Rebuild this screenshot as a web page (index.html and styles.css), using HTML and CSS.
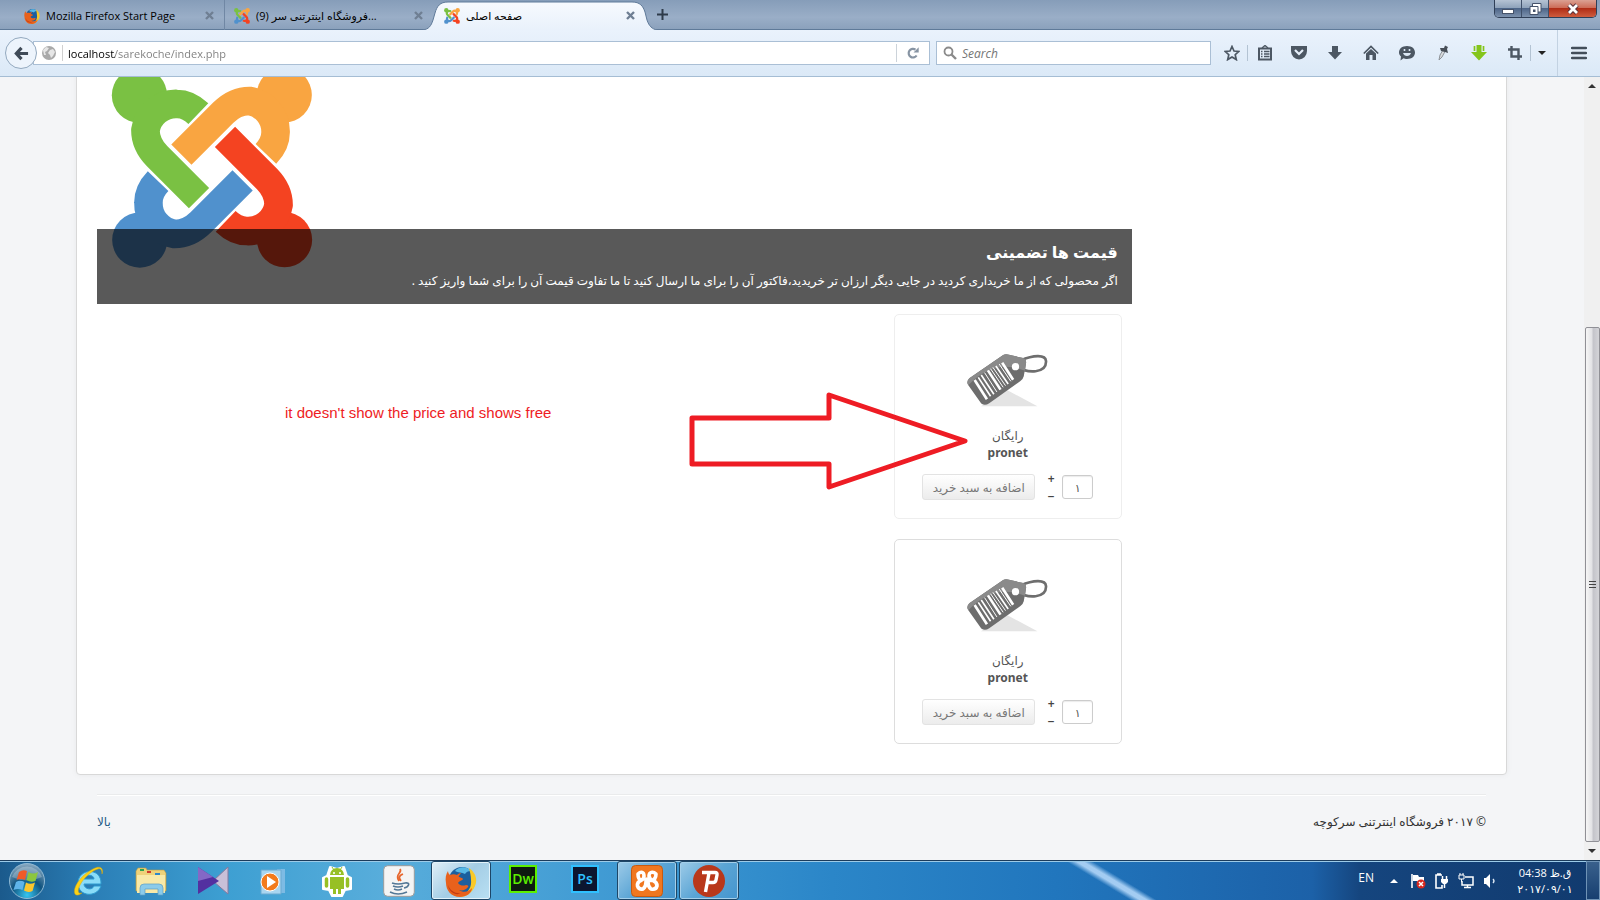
FILE: index.html
```html
<!DOCTYPE html>
<html lang="fa">
<head>
    <meta charset="UTF-8">
    <meta name="viewport" content="width=device-width, initial-scale=1.0">
    <title>صفحه اصلی</title>
    <link rel="stylesheet" href="styles.css">
</head>
<body>
    <!-- shared shapes -->
    <svg class="defs" aria-hidden="true">
        <defs>
            <g id="arm">
                <circle cx="207" cy="75" r="83"/>
                <path d="M386 384L260 258Q225 222 225 180A93 93 0 0 1 320 101Q354 101 384 130" fill="none" stroke="currentColor" stroke-width="86"/>
            </g>
            <symbol id="joomla" viewBox="120 -10 610 607">
                <use href="#arm" fill="#7ac143" color="#7ac143"/>
                <use href="#arm" fill="#f9a541" color="#f9a541" transform="rotate(90 425 292)"/>
                <use href="#arm" fill="#f44321" color="#f44321" transform="rotate(180 425 292)"/>
                <use href="#arm" fill="#5091cd" color="#5091cd" transform="rotate(270 425 292)"/>
            </symbol>
            <symbol id="firefox" viewBox="0 0 32 32">
                <circle cx="17" cy="15" r="13" fill="#1b5f9e"/>
                <path d="M10 6c4-5 12-5 16 0-3 0-5 1-6 3-3-2-7-1-10-3z" fill="#58b9e6"/>
                <path d="M24 3c6 4 9 11 6 18-3 7-9 11-15 11 7-3 12-9 11-17 0-4-1-8-2-12z" fill="#f9c928"/>
                <path d="M3 6c0 2 1 3 2 4 2-1 5-1 7 0 1-1 2-2 4-2-1 2-3 3-2 4 2 1 4 1 4 2s-4 2-5 4c2 3 6 3 8 2 2 0 3 1 2 2-2 3-6 4-9 3 4 3 10 2 13-2 0 5-6 9-12 9C6 32 1 25 1 18 0 13 1 9 3 6z" fill="#e8611c"/>
                <path d="M3 20c2 6 8 9 13 8-4 3-12 0-13-8z" fill="#c23a14"/>
            </symbol>
            <symbol id="close" viewBox="0 0 9 9">
                <path d="M1 1L8 8M8 1L1 8" stroke="#6f7f93" stroke-width="2.4"/>
            </symbol>
            <symbol id="tag" viewBox="263 160 244 162">
                <path d="M305 320L385 272 475 320z" fill="#e4e4e4"/>
                <path d="M412 200C445 222 503 222 501 184C500 163 462 166 424 182" fill="none" stroke="#6e6e6e" stroke-width="8"/>
                <path d="M270 236L372 166Q378 162 386 164L432 175Q442 179 441 189L434 230Q432 239 424 244L330 311Q317 320 306 312L267 257Q260 246 270 236z" fill="#6d6d6d"/>
                <path d="M270 236L372 166Q378 162 386 164L432 175Q442 179 441 189L438 213Q345 176 267 257Q260 246 270 236z" fill="#8a8a8a"/>
                <circle cx="409" cy="201" r="11" fill="#fff"/>
                <g stroke="#fff">
                    <path d="M286 241L323 299M326 212L364 270M369 189L402 240" stroke-width="8"/>
                    <path d="M297 233L334 290M306 226L344 284M350 199L387 253" stroke-width="5"/>
                    <path d="M316 219L353 277M334 207L372 263M341 203L379 258M360 193L395 245" stroke-width="3"/>
                </g>
            </symbol>
        </defs>
    </svg>

    <header class="tabbar">
        <div class="tab">
            <svg class="favicon"><use href="#firefox"/></svg>
            <span class="tab-title">Mozilla Firefox Start Page</span>
            <button class="tab-close" aria-label="Close tab"><svg><use href="#close"/></svg></button>
        </div>
        <div class="tab tab-second">
            <svg class="favicon"><use href="#joomla"/></svg>
            <span class="tab-title">(9) فروشگاه اینترتنی سر...</span>
            <button class="tab-close" aria-label="Close tab"><svg><use href="#close"/></svg></button>
        </div>
        <div class="tab tab-active">
            <svg class="tab-shape" viewBox="0 0 234 30" preserveAspectRatio="none">
                <defs>
                    <linearGradient id="tabfill" x2="0" y2="1"><stop stop-color="#f7fafe"/><stop offset="1" stop-color="#e9f1fb"/></linearGradient>
                </defs>
                <path d="M0 30C6 29 8 26 10 20L12 13C14 6 17 2 25 2H209C217 2 220 6 222 12L224 20C226 26 229 29 234 30" fill="url(#tabfill)" stroke="#5f7a99"/>
            </svg>
            <svg class="favicon"><use href="#joomla"/></svg>
            <span class="tab-title">صفحه اصلی</span>
            <button class="tab-close" aria-label="Close tab"><svg><use href="#close"/></svg></button>
        </div>
        <button class="new-tab" aria-label="New tab">
            <svg viewBox="0 0 11 11"><path d="M5.500 0V11M0 5.500H11" stroke="#2e3b4a" stroke-width="2"/></svg>
        </button>
        <div class="window-buttons">
            <button class="win" aria-label="Minimize"><svg viewBox="0 0 14 12"><rect x="1.500" y="6.500" width="11" height="4" fill="#fff" stroke="#46536a"/></svg></button>
            <button class="win" aria-label="Restore"><svg viewBox="0 0 14 12"><path d="M4.500.5H13V9H4.500z" fill="#fff" stroke="#46536a"/><path d="M2 3.500H10V11.500H2z" fill="#fff" stroke="#46536a"/><path d="M5 6.500H7.500V9H5z" fill="#46536a"/></svg></button>
            <button class="win win-close" aria-label="Close"><svg viewBox="0 0 14 12"><path d="M3 2L11 10M11 2L3 10" stroke="#55303a" stroke-width="4.600"/><path d="M3 2L11 10M11 2L3 10" stroke="#fff" stroke-width="2.800"/></svg></button>
        </div>
    </header>

    <nav class="toolbar">
        <button class="back" aria-label="Back">
            <svg viewBox="0 0 16 16"><path d="M8 2L2.500 8 8 14M3 8H15" fill="none" stroke="#404b58" stroke-width="3.400"/></svg>
        </button>
        <div class="urlbar">
            <svg class="globe" viewBox="0 0 14 14"><circle cx="7" cy="7" r="7" fill="#a9a9a9"/><path d="M1 4L4 1 7 2 5 5 3 6 4 9 2 9zM8 4L11 3 13 6 11 10 9 12 8 9 6 7z" fill="#e6e6e6"/></svg>
            <input class="url" type="text" aria-label="Address" value="localhost/sarekoche/index.php">
            <button class="reload" aria-label="Reload">
                <svg viewBox="0 0 12 12"><path d="M9.600 8.500A4.300 4.300 0 1 1 8.500 2.700" fill="none" stroke="#8794a3" stroke-width="2.200"/><path d="M6.500 5.500H11.700V.2z" fill="#8794a3"/></svg>
            </button>
        </div>
        <div class="search">
            <svg viewBox="0 0 14 14"><circle cx="5.500" cy="5.500" r="4" fill="none" stroke="#8a8a8a" stroke-width="1.800"/><path d="M8.500 8.500L13 13" stroke="#8a8a8a" stroke-width="2.400"/></svg>
            <input type="text" placeholder="Search" aria-label="Search">
        </div>
        <div class="tools">
            <button aria-label="Bookmark"><svg viewBox="0 0 16 16"><path d="M8 1.500L10 6 14.800 6.400 11.200 9.700 12.300 14.600 8 12 3.700 14.600 4.800 9.700 1.200 6.400 6 6z" fill="none" stroke="#4c5763" stroke-width="1.700"/></svg></button>
            <button class="divided" aria-label="Bookmarks list"><svg viewBox="0 0 16 16"><path d="M2 3.500H14V14.500H2z" fill="none" stroke="#4c5763" stroke-width="2"/><path d="M5 3L8 .5 11 3M4 6.500H5.500M7 6.500H12.500M4 9H5.500M7 9H12.500M4 11.500H5.500M7 11.500H12.500" fill="none" stroke="#4c5763" stroke-width="1.400"/></svg></button>
            <button aria-label="Pocket"><svg viewBox="0 0 16 16"><path d="M0 1H16V6A8 8.500 0 0 1 0 6z" fill="#4c5763"/><path d="M4 5L8 9 12 5" fill="none" stroke="#e6effa" stroke-width="2.200"/></svg></button>
            <button aria-label="Downloads"><svg viewBox="0 0 16 16"><path d="M5 1H11V7H15L8 14.500 1 7H5z" fill="#4c5763"/></svg></button>
            <button aria-label="Home"><svg viewBox="0 0 16 16"><path d="M.8 8.500L8 1.500 15.200 8.500" fill="none" stroke="#4c5763" stroke-width="1.700"/><path d="M3 8.500L8 4 13 8.500V15H9.500V10H6.500V15H3z" fill="#4c5763"/></svg></button>
            <button aria-label="Chat"><svg viewBox="0 0 16 16"><path d="M8 1C13 1 16 3.800 16 7.500S13 14 8 14C6.500 14 5.500 13.700 4.500 13.300L1.500 15.500 2 11.500C.5 10 0 9 0 7.500 0 3.800 3 1 8 1z" fill="#4c5763"/><path d="M4 8H12Q11 11 8 11T4 8z" fill="#dce8f5"/><path d="M5.500 4V6M10.500 4V6" stroke="#dce8f5" stroke-width="1.600"/></svg></button>
            <button aria-label="Pin"><svg viewBox="0 0 16 16"><path d="M4 15L5 10 8 5 10 6.500 7 12z" fill="#d7dadd" stroke="#8d9399"/><path d="M5 3L9 3 10 .5 13 2 12 4 13 8 10 7 6 6z" fill="#474e57"/></svg></button>
            <button aria-label="Quick download"><svg viewBox="0 0 16 16"><path d="M5.500 0H10.500V7H16L8 15.500 0 7H5.500z" fill="#84c51a"/><path d="M3.500 1V6M12.500 1V6" stroke="#84c51a" stroke-width="1.700"/></svg></button>
            <button aria-label="Capture"><svg viewBox="0 0 16 16"><path d="M4.500 1V11.500H15M1 4.500H11.500V15" fill="none" stroke="#4c5763" stroke-width="2.400"/></svg></button>
            <button class="divided more" aria-label="Capture options"><svg viewBox="0 0 8 4"><path d="M0 0H8L4 4z" fill="#222"/></svg></button>
            <button class="burger" aria-label="Menu"><svg viewBox="0 0 16 14"><path d="M1 2H15M1 7H15M1 12H15" stroke="#434e5a" stroke-width="2.400" stroke-linecap="round"/></svg></button>
        </div>
    </nav>

    <div class="viewport">
        <div class="page">
            <main class="panel">
                <section class="content">
                    <div class="slide">
                        <svg class="logo"><use href="#joomla"/></svg>
                        <div class="caption" dir="rtl">
                            <h2>قیمت ها تضمینی</h2>
                            <p>اگر محصولی که از ما خریداری کردید در جایی دیگر ارزان تر خریدید،فاکتور آن را برای ما ارسال کنید تا ما تفاوت قیمت آن را برای شما واریز کنید .</p>
                        </div>
                    </div>
                    <div class="products" dir="rtl">
                        <article class="product">
                            <svg class="tag"><use href="#tag"/></svg>
                            <span class="price">رایگان</span>
                            <strong class="name">pronet</strong>
                            <div class="buy">
                                <input class="qty" type="text" value="۱" aria-label="تعداد">
                                <div class="steps">
                                    <button>+</button>
                                    <button>−</button>
                                </div>
                                <button class="add">اضافه به سبد خرید</button>
                            </div>
                        </article>
                        <article class="product hovered">
                            <svg class="tag"><use href="#tag"/></svg>
                            <span class="price">رایگان</span>
                            <strong class="name">pronet</strong>
                            <div class="buy">
                                <input class="qty" type="text" value="۱" aria-label="تعداد">
                                <div class="steps">
                                    <button>+</button>
                                    <button>−</button>
                                </div>
                                <button class="add">اضافه به سبد خرید</button>
                            </div>
                        </article>
                    </div>
                </section>
            </main>
            <footer class="footer" dir="rtl">
                <span>© ۲۰۱۷ فروشگاه اینترتنی سرکوچه</span>
                <a href="#">بالا</a>
            </footer>
            <!-- notes drawn over the page -->
            <p class="note">it doesn't show the price and shows free</p>
            <svg class="arrow" viewBox="0 0 280 100"><path d="M3 27H140V4L276 50 140 96V73H3z" fill="none" stroke="#ee1c24" stroke-width="5" stroke-linejoin="round"/></svg>
        </div>
        <div class="scrollbar">
            <svg class="scroll-arrow" viewBox="0 0 8 4"><path d="M0 4H8L4 0z" fill="#333"/></svg>
            <div class="scroll-track">
                <div class="thumb"><i></i><i></i><i></i></div>
            </div>
            <svg class="scroll-arrow" viewBox="0 0 8 4"><path d="M0 0H8L4 4z" fill="#333"/></svg>
        </div>
    </div>

    <div class="taskbar">
        <button class="start" aria-label="Start">
            <svg viewBox="0 0 38 38">
                <defs>
                    <radialGradient id="orb" cy=".9" r=".9"><stop stop-color="#35c5f0"/><stop offset=".5" stop-color="#10537f"/><stop offset="1" stop-color="#8cabc2"/></radialGradient>
                </defs>
                <circle cx="19" cy="19" r="17.500" fill="url(#orb)" stroke="#8fb9d4"/>
                <path d="M4 15A16 16 0 0 1 34 15Q19 22 4 15z" fill="#fff" opacity=".25"/>
                <path d="M11 10Q15 7 19 9L17 18Q13 16 8.500 18z" fill="#f05a28"/>
                <path d="M20.500 10Q25 13 30 10L27.500 19Q23 21 18.500 18z" fill="#8cc63e"/>
                <path d="M8 20Q12 17.500 16.500 20L14.500 28Q10 26 5.500 28z" fill="#5fb4ea"/>
                <path d="M18 20.500Q22 23 27 20.500L24.500 29Q20 31 16 28.500z" fill="#fcc62c"/>
            </svg>
        </button>
        <div class="apps">
            <button class="app" aria-label="Internet Explorer"><svg viewBox="0 0 32 32"><path d="M28 19H11C11 24 19 26 21 21H28C24 33 5 32 5 18 5 3 29 2 28 19zM11 14H21C21 9 11 9 11 14z" fill="#8adcf8" stroke="#2d9bd0"/><path d="M29 9C31 3 27 0 20 4 8 10-1 23 2 29 4 32 9 28 9 28 5 29 4 26 7 20 11 12 20 5 25 4 28 3 29 5 29 9z" fill="#fbd216" stroke="#d9a60d" stroke-width=".5"/></svg></button>
            <button class="app" aria-label="Explorer"><svg viewBox="0 0 32 32"><path d="M1 6L3 3H11L12 5H29L31 8V26H1z" fill="#eed27a" stroke="#b99a44" stroke-width=".6"/><path d="M5 4H9V6H5z" fill="#2ea54c"/><path d="M12 6H16V8H12z" fill="#d03a2c"/><path d="M20 8H25V10H20z" fill="#2c87c9"/><path d="M2 10H30V28H2z" fill="#f8e9a8"/><path d="M5 30V23Q5 19 9 19H24Q28 19 28 23V30H23V24H10V30z" fill="#8bcbea" stroke="#5d9fc4" stroke-width=".7"/></svg></button>
            <button class="app" aria-label="KMPlayer"><svg viewBox="0 0 32 32"><path d="M31 2V29L16 16z" fill="#c9c0d8" stroke="#87799e"/><path d="M1 2L22 16 1 29z" fill="#5330a0"/><path d="M1 2L16 12 1 16z" fill="#8468c6"/></svg></button>
            <button class="app" aria-label="Media Player"><svg viewBox="0 0 32 32"><path d="M18 4H26V28H20z" fill="#7dbbe4"/><path d="M2 5H22V29H2z" fill="#a8d5f0" stroke="#6aa9d0"/><circle cx="11" cy="17" r="9" fill="#f37b1d" stroke="#fff"/><path d="M8 11L17 17 8 23z" fill="#fff"/></svg></button>
            <button class="app" aria-label="Android"><svg viewBox="0 0 32 32"><path d="M9 2L16 4 23 2 26 11 30 13V24L24 25 21 31H11L8 25 2 24V13L6 11z" fill="#fff" stroke="#fff" stroke-width="2" stroke-linejoin="round"/><path d="M9 10A7 7 0 0 1 23 10zM9 12H23V24H20V29H17V24H15V29H12V24H9z" fill="#97c024"/><path d="M5.500 14V21M26.500 14V21" stroke="#97c024" stroke-width="3.500" stroke-linecap="round"/><path d="M11 2L13 5M21 2L19 5" stroke="#97c024"/><path d="M12 8H14M18 8H20" stroke="#fff" stroke-width="1.500"/></svg></button>
            <button class="app" aria-label="Java"><svg viewBox="0 0 32 32"><rect x=".7" y=".7" width="30.600" height="30.600" rx="4" fill="#f4f4f4" stroke="#9b9b9b"/><path d="M17 4C20 8 11 9 16 16M20 9C15 11 16 13 18 16" fill="none" stroke="#e7662c" stroke-width="1.800"/><path d="M9 18Q15 20 22 18M22 18C28 17 26 22 21 23M10 21Q15 23 20 21M11 24Q15 26 19 24M7 27Q15 31 24 27" fill="none" stroke="#527796" stroke-width="1.600"/></svg></button>
            <button class="app running focused" aria-label="Firefox"><svg><use href="#firefox"/></svg></button>
            <button class="app" aria-label="Dreamweaver"><span class="adobe dw">Dw</span></button>
            <button class="app" aria-label="Photoshop"><span class="adobe ps">Ps</span></button>
            <button class="app running" aria-label="XAMPP"><svg viewBox="0 0 32 32"><rect x=".5" y=".5" width="31" height="31" rx="4" fill="#f0771f" stroke="#c75a10"/><path d="M7 9C10 6 13 7 13 11Q13 14 10 15.500 6 17 6.500 21 8 25 12 24 15 22 15 17V15Q16 13 17 15V17Q17 22 20 24 25 25 26 21 26 17 22 15.500M25 9C22 6 18 7 18 11Q19 15 22 15.500M20 15.500Q25 15 25 9M10 15.500Q7 14 7 9" fill="none" stroke="#fff" stroke-width="3.600" stroke-linecap="round" stroke-linejoin="round"/></svg></button>
            <button class="app running" aria-label="Psiphon"><svg viewBox="0 0 32 32"><circle cx="16" cy="16" r="16" fill="#b9381b"/><path d="M9 7.500H22Q24.500 7.500 24 10L23 15Q22.500 17.500 20 17.500H14M16 8L12.500 27" fill="none" stroke="#fff" stroke-width="3.400"/></svg></button>
        </div>
        <div class="tray">
            <span class="lang">EN</span>
            <svg class="tray-up" viewBox="0 0 8 4"><path d="M0 4H8L4 0z" fill="#fff"/></svg>
            <svg viewBox="0 0 16 16"><path d="M2 1V15" stroke="#fff" stroke-width="1.600"/><path d="M3 2H8L9 4H14V9H8L7 8H3z" fill="#fff"/><circle cx="11" cy="11" r="4.500" fill="#d8281f"/><path d="M9 9L13 13M13 9L9 13" stroke="#fff" stroke-width="1.500"/></svg>
            <svg viewBox="0 0 16 16"><path d="M8 2H2V15H8V12M3 1H7" fill="none" stroke="#fff" stroke-width="1.600"/><path d="M7 6H14V9L12 11H9L7 9z" fill="#fff"/><path d="M8.500 3V6M12.500 3V6M10.500 11V15" stroke="#fff" stroke-width="1.500"/></svg>
            <svg viewBox="0 0 16 16"><path d="M7 4H15V12H4V8M6 14.500H13M9.500 12V14" fill="none" stroke="#fff" stroke-width="1.500"/><path d="M1 2H6V6H1zM3.500 6V9M2 0V2M5 0V2" fill="none" stroke="#fff"/></svg>
            <svg viewBox="0 0 16 16"><path d="M2 5H4L8 1V15L4 11H2z" fill="#fff"/><path d="M11 6Q13 8 11 10" fill="none" stroke="#dce8f5" stroke-width="1.400"/></svg>
            <div class="clock">
                <span>04:38 ق.ظ</span>
                <span>۲۰۱۷/۰۹/۰۱</span>
            </div>
            <button class="desktop" aria-label="Show desktop"></button>
        </div>
    </div>
</body>
</html>
```
FILE: styles.css
```css
* {
    box-sizing: border-box;
}
body {
    margin: 0;
    height: 100vh;
    display: flex;
    flex-direction: column;
    overflow: hidden;
    font-family: "Open Sans", "DejaVu Sans", sans-serif;
    font-size: 11px;
    color: #000;
}
button {
    padding: 0;
    border: none;
    background: none;
    font: inherit;
    display: flex;
    align-items: center;
    justify-content: center;
}
input {
    font: inherit;
    border: none;
    outline: none;
    padding: 0;
    min-width: 0;
}
svg {
    display: block;
    flex: none;
}
.defs {
    position: absolute;
    width: 0;
    height: 0;
}

/* tabs */
.tabbar {
    display: flex;
    height: 30px;
    flex: none;
    padding-left: 12px;
    border-bottom: 1px solid #5f7a99;
    background: linear-gradient(#869db9, #9aaec7 60%, #8ba1bc);
}
.tab {
    display: flex;
    align-items: center;
    gap: 6px;
    width: 212px;
    height: 30px;
    padding: 1px 10px 0 12px;
    position: relative;
}
.tab-second {
    width: 199px;
    padding: 1px 0 0 9px;
    border-left: 1px solid #7087a4;
}
.tab-active {
    width: 234px;
    padding: 1px 22px 0 21px;
}
.tab-shape {
    position: absolute;
    left: 0;
    top: 0;
    width: 100%;
    height: 30px;
}
.tab-active .favicon,
.tab-active .tab-title,
.tab-active .tab-close {
    position: relative;
}
.favicon {
    width: 16px;
    height: 16px;
}
.tab-title {
    flex: 1;
    white-space: nowrap;
}
.tab-close svg {
    width: 9px;
    height: 9px;
}
.new-tab svg {
    width: 11px;
    height: 11px;
}
.window-buttons {
    display: flex;
    height: 18px;
    margin: 0 3px 0 auto;
    border: 1px solid #2f3f57;
    border-top: none;
    border-radius: 0 0 5px 5px;
    overflow: hidden;
}
.win {
    width: 27px;
    background: linear-gradient(#b5c3d4, #8fa3bb 45%, #4d6588 50%, #7d92ae);
    border-right: 1px solid #3f506a;
}
.win svg {
    width: 14px;
    height: 12px;
}
.win-close {
    width: 47px;
    border: none;
    background: linear-gradient(#dba193, #cd6d58 45%, #b02d16 50%, #cf5c3e);
}

/* toolbar */
.toolbar {
    display: flex;
    align-items: center;
    height: 47px;
    flex: none;
    padding: 0 9px 0 5px;
    border-bottom: 1px solid #a5bdd4;
    background: linear-gradient(#eaf2fc, #dbe9f7);
}
.back {
    width: 32px;
    height: 32px;
    flex: none;
    border: 1px solid #93a9bf;
    border-radius: 50%;
    background: #edf4fc;
    z-index: 1;
}
.back svg {
    width: 15px;
    height: 15px;
}
.urlbar {
    display: flex;
    align-items: center;
    flex: 1;
    height: 24px;
    margin: 0 6px 0 -4px;
    padding-left: 8px;
    border: 1px solid #aabfd5;
    background: #fff;
}
.globe {
    width: 14px;
    height: 14px;
}
.url {
    flex: 1;
    height: 16px;
    margin-left: 6px;
    padding-left: 5px;
    border-left: 1px solid #d0d0d0;
    background: linear-gradient(90deg, #000 52px, #7d7d7d 52px);
    -webkit-background-clip: text;
    background-clip: text;
    color: transparent;
}
.reload {
    width: 33px;
    height: 18px;
    border-left: 1px solid #ccd3da;
}
.reload svg {
    width: 12px;
    height: 12px;
}
.search {
    display: flex;
    align-items: center;
    gap: 5px;
    width: 275px;
    height: 24px;
    padding: 0 6px;
    border: 1px solid #aabfd5;
    background: #fff;
}
.search svg {
    width: 14px;
    height: 14px;
}
.search input {
    flex: 1;
    font-size: 12px;
}
.search input::placeholder {
    color: #757575;
    font-style: italic;
}
.tools {
    display: flex;
    align-items: center;
    height: 46px;
    padding-left: 5px;
}
.tools button {
    width: 36px;
    height: 16px;
}
.tools button:first-child {
    width: 31px;
}
.tools svg {
    width: 16px;
    height: 16px;
}
.tools .divided {
    width: 34px;
    border-left: 1px solid #b3c3d3;
}
.tools .more {
    width: 22px;
    margin: 0 5px 0 -3px;
}
.tools .more svg {
    width: 8px;
    height: 4px;
}
.tools .burger {
    width: 34px;
    height: 46px;
    padding-left: 8px;
    border-left: 1px solid #c3d2e2;
}

/* page */
.viewport {
    flex: 1;
    display: flex;
    min-height: 0;
    background: #f4f5f7;
    font-family: "Noto Sans", "DejaVu Sans", sans-serif;
    font-size: 12px;
}
.page {
    flex: 1;
    position: relative;
    overflow: hidden;
    padding: 0 77px 0 76px;
}
.panel {
    margin-top: -11px;
    padding: 0 20px 30px;
    border: 1px solid #d8d8d8;
    border-radius: 4px;
    background: #fff;
    box-shadow: 0 0 6px rgba(0, 0, 0, 0.05);
}
.content {
    width: 74.5%;
}
.slide {
    position: relative;
    padding: 0 13px 35px;
}
.logo {
    width: 204px;
    height: 202px;
}
.caption {
    position: absolute;
    left: 0;
    right: 0;
    bottom: 0;
    height: 75px;
    padding: 11px 14px;
    background: rgba(0, 0, 0, 0.65);
    color: #fff;
}
.caption h2 {
    margin: 0 0 8px;
    font-size: 16px;
    line-height: 24px;
}
.caption p {
    margin: 0;
    font-size: 12px;
    line-height: 18px;
    white-space: nowrap;
}
.products {
    display: flex;
    flex-direction: column;
    gap: 20px;
    padding: 10px 10px 0;
}
.product {
    display: flex;
    flex-direction: column;
    align-items: center;
    width: 228px;
    height: 205px;
    padding-top: 38px;
    border: 1px solid #eee;
    border-radius: 5px;
    color: #555;
}
.hovered {
    border-color: #ddd;
}
.tag {
    width: 81px;
    height: 54px;
    margin-bottom: 20px;
}
.price,
.name {
    font-size: 12px;
    line-height: 17px;
}
.buy {
    display: flex;
    align-items: center;
    margin-top: 8px;
}
.qty {
    width: 31px;
    height: 24px;
    border: 1px solid #ccc;
    border-radius: 3px;
    box-shadow: inset 0 1px 1px rgba(0, 0, 0, 0.08);
    text-align: center;
    font-size: 11px;
    color: #555;
}
.steps {
    width: 27px;
    padding-right: 6px;
}
.steps button {
    width: 10px;
    height: 18px;
    font-weight: 600;
    color: #444;
}
.add {
    width: 113px;
    height: 26px;
    border: 1px solid #e3e3e3;
    border-radius: 3px;
    background: linear-gradient(#fff, #ececec);
    font-size: 12px;
    color: #777;
}
.footer {
    display: flex;
    justify-content: space-between;
    margin: 19px 21px 0;
    padding-top: 18px;
    border-top: 1px solid #eaebec;
    box-shadow: inset 0 1px #fff;
    font-size: 12px;
    line-height: 18px;
    color: #333;
}
.footer a {
    color: #1f5a87;
    text-decoration: none;
}
.note {
    position: absolute;
    left: 285px;
    top: 327px;
    margin: 0;
    font-family: "Liberation Sans", Arial, sans-serif;
    font-size: 15px;
    line-height: 18px;
    color: #ee1c24;
}
.arrow {
    position: absolute;
    left: 689px;
    top: 314px;
    width: 280px;
    height: 100px;
}
.scrollbar {
    display: flex;
    flex-direction: column;
    align-items: center;
    width: 16px;
    padding: 7px 0;
    background: #f0f0f0;
}
.scroll-arrow {
    width: 8px;
    height: 4px;
}
.scroll-track {
    flex: 1;
    display: flex;
    align-items: flex-end;
    margin: 7px 0;
}
.thumb {
    display: flex;
    flex-direction: column;
    align-items: center;
    justify-content: center;
    gap: 2px;
    width: 15px;
    height: 69%;
    border: 1px solid #909096;
    border-radius: 2px;
    background: linear-gradient(90deg, #f6f6f6, #e2e2e5 45%, #c4c4ca 55%, #d4d4d8);
}
.thumb i {
    width: 7px;
    height: 1px;
    background: #444;
}

/* taskbar */
.taskbar {
    display: flex;
    height: 40px;
    flex: none;
    border-top: 1px solid #1c3c5c;
    box-shadow: inset 0 1px #9ccbe8;
    background:
        linear-gradient(31deg, transparent 42%, #a3ccf2 48%, #a3ccf2 52%, transparent 58%) 1062px 0 / 100px 40px no-repeat,
        linear-gradient(90deg, #1b5a8c, #2b7fb7 6%, #3d9fd2 14%, #58addb 24%, #3d98d2 40%, #2b86c8 52%, #2176bd 66%, #1c61a8 82%, #15457e 85%, #113a6e);
}
.start {
    width: 59px;
    padding-right: 5px;
}
.start svg {
    width: 38px;
    height: 38px;
}
.apps {
    display: flex;
    gap: 2px;
}
.app {
    width: 60px;
    height: 39px;
}
.app svg {
    width: 32px;
    height: 32px;
}
.running {
    border: 1px solid #1d4667;
    border-radius: 3px;
    background: linear-gradient(135deg, #9dcbe8, #5ba5d5 50%, #4595ce);
    box-shadow: inset 0 0 0 1px #a4cfea;
}
.focused {
    background: linear-gradient(135deg, #e0eff7, #a4cde5 50%, #b9e0f3);
    box-shadow: inset 0 0 0 1px #e3f3fb;
}
.adobe {
    width: 28px;
    height: 28px;
    margin-bottom: 4px;
    border: 2px solid;
    background: #0d1a10;
    font-size: 14px;
    font-weight: 600;
    line-height: 23px;
}
.dw {
    color: #5cf000;
}
.ps {
    background: #0c1630;
    color: #2fc0ff;
}
.tray {
    display: flex;
    align-items: center;
    gap: 8px;
    margin-left: auto;
    color: #fff;
}
.tray svg {
    width: 16px;
    height: 16px;
}
.lang {
    margin: 0 8px 6px 0;
    font-size: 12px;
}
.tray .tray-up {
    width: 8px;
    height: 4px;
    margin-right: 4px;
}
.clock {
    display: flex;
    flex-direction: column;
    align-items: center;
    width: 70px;
    margin-left: 4px;
    line-height: 16px;
    white-space: nowrap;
}
.desktop {
    width: 14px;
    height: 39px;
    margin-left: -2px;
    border: 1px solid #6f93b6;
    background: linear-gradient(#39608c, #173f70);
}
```
